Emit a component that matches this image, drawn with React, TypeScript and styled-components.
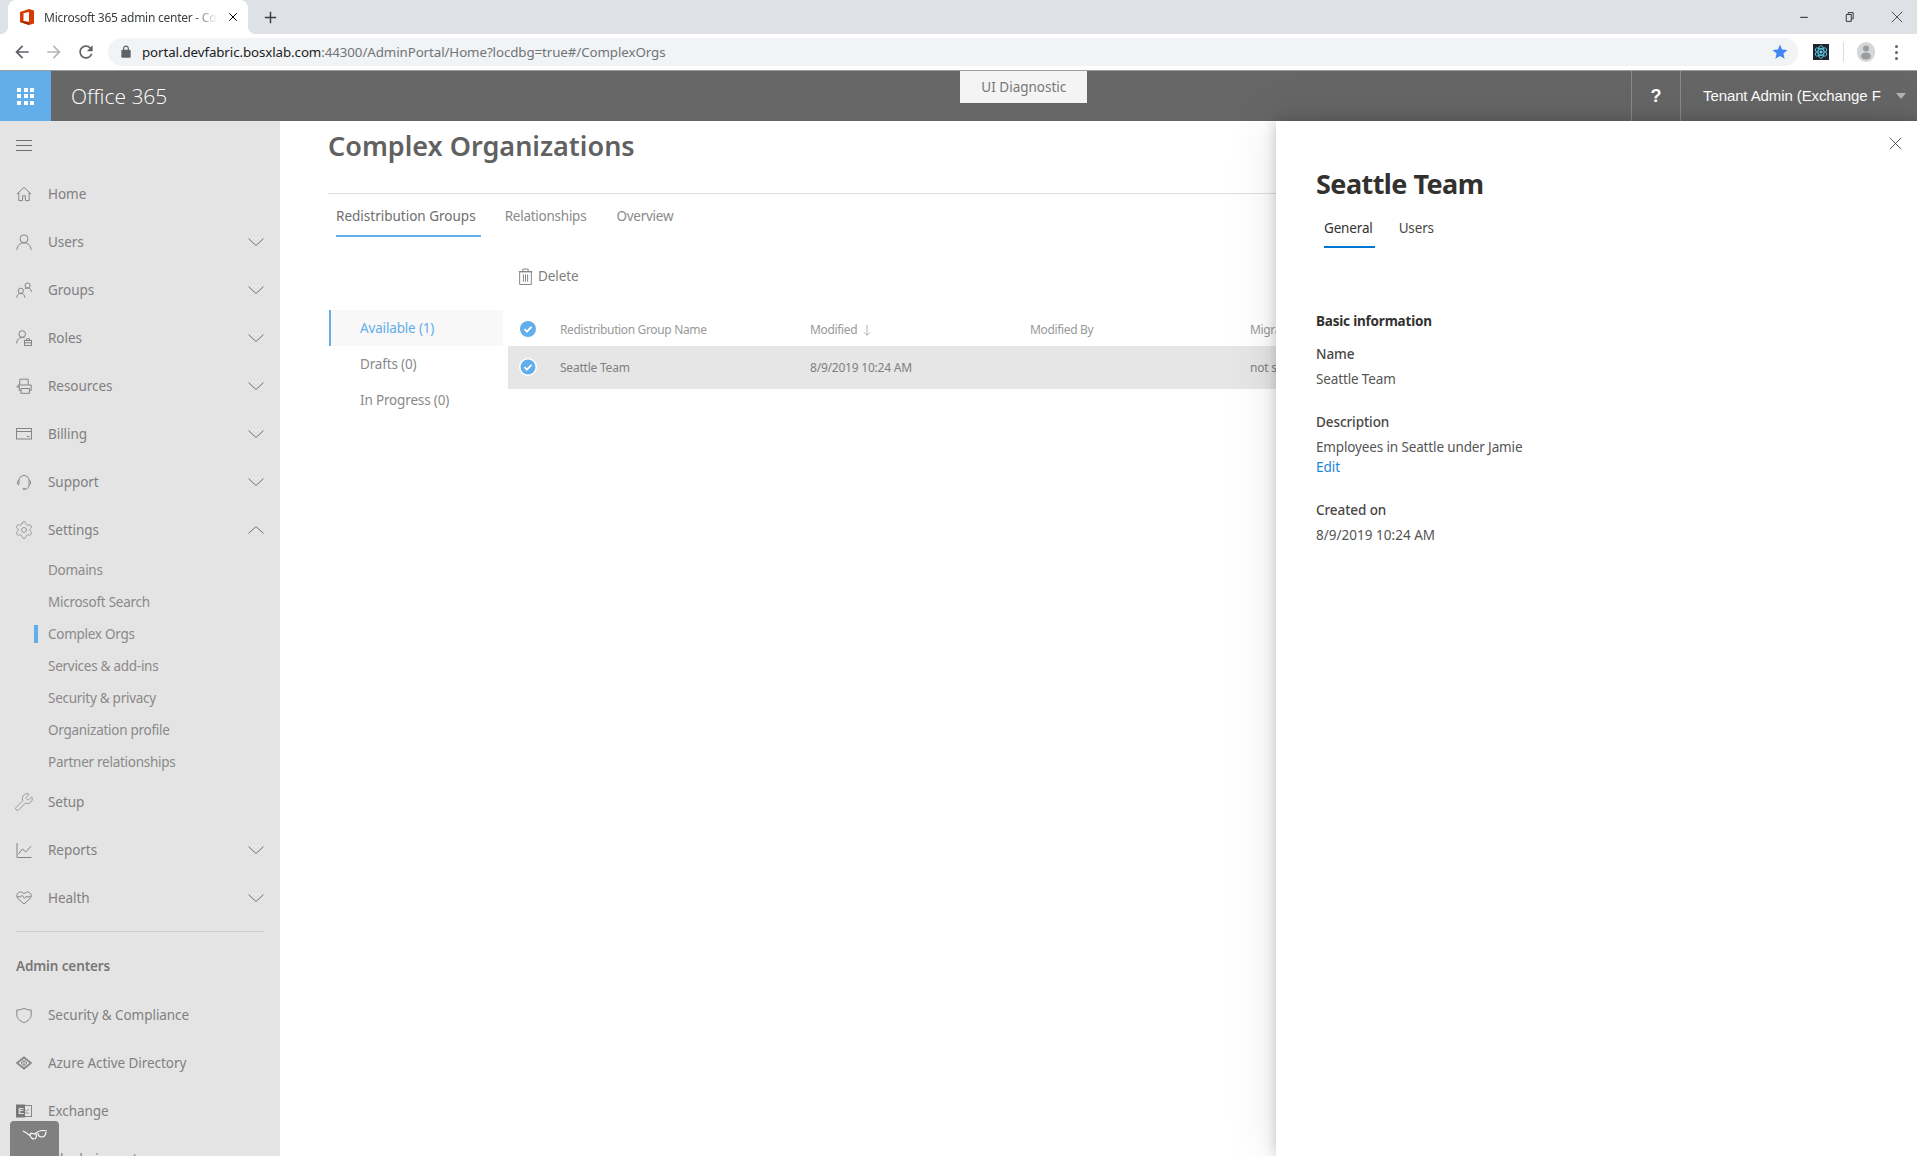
import React from 'react';
import styled, { createGlobalStyle } from 'styled-components';
import { Settings, Wrench } from 'lucide-react';

const FONT = '"Noto Sans", "Open Sans", sans-serif';

const GlobalStyle = createGlobalStyle`
  html, body {
    margin: 0;
    padding: 0;
    height: 100%;
    background: #fff;
    overflow: hidden;
  }
  * { box-sizing: border-box; }
  body { font-family: ${FONT}; }
`;

const Page = styled.div`
  width: 1917px;
  height: 1156px;
  display: flex;
  flex-direction: column;
  overflow: hidden;
`;

/* browser chrome */
const TabStrip = styled.div`
  height: 34px;
  background: #dee1e6;
  display: flex;
  align-items: flex-end;
  padding-left: 8px;
  flex: none;
`;

const Tab = styled.div`
  position: relative;
  width: 240px;
  height: 34px;
  background: #fff;
  border-radius: 8px 8px 0 0;
  display: flex;
  align-items: center;
  padding: 0 10px 0 12px;
  gap: 10px;

  &::before, &::after {
    content: '';
    position: absolute;
    bottom: 0;
    width: 8px;
    height: 8px;
  }
  &::before {
    left: -8px;
    background: radial-gradient(circle at 0 0, #dee1e6 8px, #fff 8.5px);
  }
  &::after {
    right: -8px;
    background: radial-gradient(circle at 100% 0, #dee1e6 8px, #fff 8.5px);
  }
`;

const TabTitle = styled.span`
  flex: 1;
  font-size: 12px;
  color: #3c4043;
  white-space: nowrap;
  overflow: hidden;
  letter-spacing: -0.25px;
  -webkit-mask-image: linear-gradient(90deg, #000 85%, transparent);
  mask-image: linear-gradient(90deg, #000 85%, transparent);
`;

const NewTab = styled.div`
  width: 16px;
  height: 34px;
  margin-left: 16px;
  display: flex;
  align-items: center;
  color: #3c4043;
`;

const WindowControls = styled.div`
  margin-left: auto;
  height: 34px;
  display: flex;
  align-items: center;
  padding-right: 14px;
  gap: 36px;
  color: #222;
`;

const Toolbar = styled.div`
  height: 36px;
  background: #fff;
  display: flex;
  align-items: center;
  padding-left: 6px;
  flex: none;
`;

const ToolbarButton = styled.div<{ $muted?: boolean }>`
  width: 32px;
  height: 32px;
  display: flex;
  align-items: center;
  justify-content: center;
  color: ${p => (p.$muted ? '#b4b6b8' : '#5f6368')};
`;

const AddressBar = styled.div`
  margin-left: 6px;
  width: 1690px;
  height: 28px;
  border-radius: 14px;
  background: #f1f3f4;
  display: flex;
  align-items: center;
  padding: 0 9px 0 11px;
`;

const AddressText = styled.span`
  margin-left: 9px;
  font-size: 13.33px;
  letter-spacing: -0.09px;
  color: #202124;
  white-space: nowrap;
`;

const AddressRest = styled.span`
  color: #70757a;
`;

const StarSlot = styled.div`
  margin-left: auto;
  display: flex;
  align-items: center;
`;

const ToolbarEnd = styled.div`
  flex: 1;
  display: flex;
  align-items: center;
  padding-left: 15px;
`;

const ExtBadge = styled.div`
  width: 16px;
  height: 16px;
  background: #20232a;
  display: flex;
  align-items: center;
  justify-content: center;
`;

const ToolbarSep = styled.div`
  width: 1px;
  height: 20px;
  background: #dadce0;
  margin: 0 13px 0 14px;
`;

const Avatar = styled.div`
  width: 18px;
  height: 20px;
  border-radius: 9px;
  background: #d4d6d8;
  display: flex;
  align-items: center;
  justify-content: center;
  color: #9a9c9e;
`;

const Dots = styled.div`
  margin-left: 20px;
  display: flex;
  flex-direction: column;
  gap: 3px;
  i {
    display: block;
    width: 3px;
    height: 3px;
    border-radius: 50%;
    background: #5f6368;
  }
`;

/* office header */
const Header = styled.header`
  height: 51px;
  background: #666;
  border-top: 1px solid #9d9d9d;
  display: flex;
  flex: none;
  color: #fff;
`;

const Waffle = styled.div`
  width: 51px;
  background: #62aeea;
  display: flex;
  align-items: center;
  justify-content: center;
`;

const WaffleGrid = styled.div`
  display: grid;
  grid-template-columns: repeat(3, 4px);
  grid-auto-rows: 4px;
  gap: 2.5px;
  i { background: #fff; display: block; }
`;

const Brand = styled.div`
  margin-left: 20px;
  font-family: "Open Sans", sans-serif;
  font-weight: 300;
  font-size: 21px;
  line-height: 50px;
`;

const HeaderCenter = styled.div`
  flex: 1;
  padding-left: 793px;
`;

const DiagnosticTab = styled.div`
  width: 127px;
  height: 32px;
  background: #f4f4f4;
  color: #777;
  font-size: 13.5px;
  line-height: 32px;
  text-align: center;
`;

const HelpCell = styled.div`
  width: 50px;
  border-left: 1px solid #8a8a8a;
  border-right: 1px solid #8a8a8a;
  font: bold 18px "Liberation Sans", sans-serif;
  line-height: 50px;
  text-align: center;
`;

const TenantCell = styled.div`
  width: 236px;
  display: flex;
  align-items: center;
  padding-left: 22px;
  padding-bottom: 2px;
  font: 15px "Liberation Sans", sans-serif;
  white-space: nowrap;
  letter-spacing: -0.1px;
`;

const Caret = styled.div`
  margin-left: 15px;
  margin-top: 2px;
  width: 0;
  height: 0;
  border-left: 5px solid transparent;
  border-right: 5px solid transparent;
  border-top: 6px solid #b5b5b5;
`;

/* body */
const Body = styled.div`
  flex: 1;
  display: flex;
  min-height: 0;
`;

const Sidebar = styled.nav`
  position: relative;
  width: 280px;
  flex: none;
  background: #e4e4e4;
  overflow: hidden;
  color: #808080;
  font-size: 13.5px;
  letter-spacing: -0.05px;
`;

const Hamburger = styled.div`
  height: 49px;
  display: flex;
  align-items: center;
  padding-left: 16px;
  color: #707070;
`;

const NavRow = styled.div`
  height: 48px;
  display: flex;
  align-items: center;
  padding: 0 16px;
`;

const NavIconSlot = styled.div`
  width: 16px;
  height: 18px;
  margin-right: 16px;
  display: flex;
  align-items: center;
  justify-content: center;
  color: #858585;
  svg { flex: none; }
`;

const NavChevron = styled.div`
  margin-left: auto;
  display: flex;
  color: #707070;
`;

const SubRow = styled.div<{ $active?: boolean }>`
  position: relative;
  height: 32px;
  line-height: 32px;
  padding-left: 48px;
  color: #8a8a8a;
  letter-spacing: -0.27px;

  ${p => p.$active && `
    &::before {
      content: '';
      position: absolute;
      left: 34px;
      top: 7px;
      width: 4px;
      height: 18px;
      background: #62aeea;
    }
  `}
`;

const NavDivider = styled.div`
  height: 1px;
  background: #cfcfcf;
  margin: 9px 16px 0;
`;

const NavHeading = styled.div`
  height: 59px;
  line-height: 69px;
  padding-left: 16px;
  font-weight: 600;
  color: #777;
  letter-spacing: -0.12px;
`;

const GlassesTab = styled.div`
  position: absolute;
  left: 10px;
  bottom: 0;
  width: 49px;
  height: 35px;
  background: #808080;
  border-radius: 4px 4px 0 0;
  display: flex;
  justify-content: center;
  padding-top: 8px;
  color: #fff;
`;

const Main = styled.main`
  flex: 1;
  min-width: 0;
  overflow: hidden;
  padding-left: 48px;
`;

const PageTitle = styled.h1`
  margin: 0;
  height: 72px;
  padding-top: 5px;
  font-size: 27px;
  line-height: 40px;
  font-weight: 600;
  color: #616161;
`;

const PageTabs = styled.div`
  border-top: 1px solid #dedede;
  height: 75px;
  display: flex;
  padding-left: 8px;
  gap: 30px;
`;

const PageTab = styled.div<{ $active?: boolean }>`
  height: 43px;
  padding-right: ${p => (p.$active ? '5px' : '0')};
  margin-right: ${p => (p.$active ? '-6px' : '0')};
  line-height: 44px;
  font-size: 13.5px;
  letter-spacing: ${p => (p.$active ? '0' : '-0.25px')};
  color: ${p => (p.$active ? '#6e6e6e' : '#8a8a8a')};
  border-bottom: 2px solid ${p => (p.$active ? '#62aeea' : 'transparent')};
`;

const Workspace = styled.div`
  display: flex;
  width: 1200px;
`;

const SideList = styled.div`
  width: 174px;
  margin-top: 42px;
  margin-left: 1px;
`;

const SideItem = styled.div<{ $active?: boolean }>`
  height: 36px;
  line-height: 36px;
  padding-left: ${p => (p.$active ? '29px' : '31px')};
  font-size: 13.5px;
  letter-spacing: -0.16px;
  color: ${p => (p.$active ? '#62aeea' : '#8a8a8a')};
  background: ${p => (p.$active ? '#f8f8f8' : 'transparent')};
  border-left: ${p => (p.$active ? '2px solid #62aeea' : 'none')};
`;

const TableArea = styled.div`
  margin-left: 5px;
  flex: 1;
`;

const CommandBar = styled.div`
  height: 44px;
  display: flex;
  align-items: center;
  gap: 4px;
  padding: 0 0 28px 9px;
  font-size: 13.5px;
  letter-spacing: -0.1px;
  color: #808080;
`;

const TableRow = styled.div<{ $selected?: boolean }>`
  display: grid;
  grid-template-columns: 52px 250px 220px 220px 1fr;
  align-items: center;
  height: ${p => (p.$selected ? '43px' : '34px')};
  padding-bottom: ${p => (p.$selected ? '1px' : '0')};
  background: ${p => (p.$selected ? '#e6e6e6' : 'transparent')};
  font-size: 12px;
  letter-spacing: ${p => (p.$selected ? '-0.22px' : '-0.35px')};
  color: ${p => (p.$selected ? '#808080' : '#999')};
`;

const CheckCell = styled.div`
  display: flex;
  justify-content: center;
  padding-right: 12px;
`;

const SortArrow = styled.span`
  display: inline-flex;
  margin-left: 4px;
  vertical-align: -2px;
  color: #999;
`;

const Panel = styled.aside`
  position: relative;
  width: 641px;
  flex: none;
  background: #fff;
  padding: 0 40px;
  box-shadow: 0 0 13px rgba(0, 0, 0, 0.2), 0 0 50px rgba(0, 0, 0, 0.1);
`;

const CloseButton = styled.div`
  position: absolute;
  top: 16px;
  right: 15px;
  display: flex;
  color: #333;
`;

const PanelTitle = styled.h2`
  margin: 0;
  padding-top: 43px;
  height: 88px;
  font-size: 27px;
  line-height: 40px;
  font-weight: 700;
  letter-spacing: -0.55px;
  color: #323130;
`;

const PanelTabs = styled.div`
  display: flex;
  padding-left: 8px;
  gap: 24px;
  height: 102px;
`;

const PanelTab = styled.div<{ $active?: boolean }>`
  height: 39px;
  line-height: 38px;
  padding-right: ${p => (p.$active ? '2px' : '0')};
  font-size: 13.5px;
  letter-spacing: -0.16px;
  color: ${p => (p.$active ? '#323130' : '#484644')};
  border-bottom: 2px solid ${p => (p.$active ? '#0078d4' : 'transparent')};
`;

const SectionHeading = styled.div`
  height: 20px;
  line-height: 20px;
  font-size: 13.5px;
  font-weight: 700;
  letter-spacing: -0.2px;
  color: #323130;
  margin-bottom: 13px;
`;

const Field = styled.div`
  margin-bottom: 23px;
`;

const FieldLabel = styled.div`
  height: 20px;
  line-height: 20px;
  font-size: 13.5px;
  font-weight: 500;
  letter-spacing: -0.08px;
  color: #484644;
  margin-bottom: 5px;
`;

const FieldValue = styled.div`
  height: 20px;
  line-height: 20px;
  font-size: 13.5px;
  letter-spacing: -0.14px;
  color: #555;
`;

const DateValue = styled(FieldValue)`
  letter-spacing: 0.02px;
`;

const EditLink = styled.a`
  display: block;
  height: 20px;
  line-height: 20px;
  font-size: 13.5px;
  color: #1a86d8;
`;

/* drawings */
const Glyph = ({ children, size = 16, box = 16, width = 1 }: { children: React.ReactNode; size?: number; box?: number; width?: number }) => (
  <svg width={size} height={size} viewBox={`0 0 ${box} ${box}`} fill="none" stroke="currentColor" strokeWidth={width}>
    {children}
  </svg>
);

const Solid = ({ d, size, color }: { d: string; size: number; color?: string }) => (
  <svg width={size} height={size} viewBox="0 0 24 24" fill={color || 'currentColor'}>
    <path d={d} />
  </svg>
);

const navIcons: Record<string, React.ReactNode> = {
  home: (
    <Glyph>
      <path d="M.8 8.2 8 1.4l7.2 6.8M2.8 6.6v8h3.8v-4.8h2.8v4.8h3.800v-8" />
    </Glyph>
  ),
  users: (
    <Glyph>
      <circle cx="8" cy="4.800" r="4" />
      <path d="M1 16c0-4.400 3-7.200 7-7.200s7 2.800 7 7.200" />
    </Glyph>
  ),
  groups: (
    <Glyph>
      <circle cx="4.800" cy="8.800" r="2.600" />
      <path d="M.8 15.600c0-2.600 1.700-4.200 4-4.200s4 1.600 4 4.200" />
      <circle cx="11.600" cy="3.600" r="2.600" />
      <path d="M8.800 6.800c.8-.6 1.800-.9 2.800-.9 2.200 0 3.800 1.600 3.800 4" />
    </Glyph>
  ),
  roles: (
    <Glyph>
      <circle cx="6.200" cy="4" r="3.300" />
      <path d="M.6 13.400C.8 9.800 3.200 7.400 6.200 7.400c.8 0 1.600.2 2.400.5" />
      <rect x="8.500" y="10.500" width="7" height="5" />
      <path d="M10.500 10.500V8.800h3v1.700M8.500 12.800h7" />
    </Glyph>
  ),
  resources: (
    <Glyph>
      <path d="M3.800 6V1.200h8.400v5.300M3.800 5.500.8 9h3" />
      <path d="M5 12.500H3.200V7h12v5.500h-1.800" />
      <rect x="5" y="10.500" width="8.400" height="4.800" />
    </Glyph>
  ),
  billing: (
    <Glyph>
      <rect x=".5" y="2.500" width="15" height="10.500" />
      <path d="M.5 5.500h15M11 10.500h2.500" />
    </Glyph>
  ),
  support: (
    <Glyph>
      <path d="M3 10.500V6.500a5 5 0 0 1 10 0v4" />
      <path d="M3 6.500h-.4a1.100 1.100 0 0 0-1.100 1.100v2a1.100 1.100 0 0 0 1.100 1.100H3M13 6.500h.4a1.100 1.100 0 0 1 1.100 1.100v2a1.100 1.100 0 0 1-1.100 1.100H13" />
      <path d="M13 10.700c0 2.800-1.600 4.500-4 4.500" />
      <circle cx="8" cy="15.200" r="1" />
    </Glyph>
  ),
  settings: <Settings size={20} strokeWidth={0.9} />,
  setup: <Wrench size={20} strokeWidth={0.9} />,
  reports: (
    <Glyph>
      <path d="M1 1v14.500h14.500M2.400 12l4-5 3.400 3 5.400-6" />
    </Glyph>
  ),
  health: (
    <Glyph>
      <path d="M8 14 1.800 8.400C-.4 5.800 1.400 2 4.400 2c1.500 0 2.600.7 3.600 1.800C9 2.700 10.100 2 11.600 2c3 0 4.800 3.800 2.600 6.400z" />
      <path d="M.8 6.800h4l1.200-1.600 2.400 3.200 1.400-1.600h5" />
    </Glyph>
  ),
  shield: (
    <Glyph>
      <path d="M8 1.200C5.800 2.600 3.400 3 .8 3v4.800c0 3.600 3.200 6.200 7.200 7.800 4-1.600 7.200-4.200 7.200-7.800V3c-2.600 0-5-.4-7.200-1.800z" />
    </Glyph>
  ),
  azure: (
    <Glyph>
      <path d="M8 2.500 15 8l-7 5.500L1 8z" strokeWidth="1.800" />
      <path d="M8 5.500 11 8l-3 2.500L5 8z" />
      <path d="M8 5.500v5" />
    </Glyph>
  ),
  exchange: (
    <svg width="16" height="16" viewBox="0 0 16 16">
      <rect x="5" y="2.500" width="10.500" height="11" fill="none" stroke="#888" />
      <path d="M8 6l2.500 2L13 6M8 10h5" fill="none" stroke="#999" />
      <rect x="0" y="1.500" width="9" height="13" fill="#777" />
      <text x="2.200" y="11" fontSize="8.500" fontWeight="700" fill="#e4e4e4" fontFamily="Liberation Sans">E</text>
    </svg>
  ),
};

const ChevronDown = () => (
  <Glyph><path d="M.5 4.500 8 11.500l7.500-7" /></Glyph>
);

const ChevronUp = () => (
  <Glyph><path d="M.5 11.500 8 4.500l7.500 7" /></Glyph>
);

const RowCheck = ({ ring }: { ring?: boolean }) => (
  <svg width="18" height="18" viewBox="0 0 18 18">
    {ring && <circle cx="9" cy="9" r="9" fill="#fff" />}
    <circle cx="9" cy="9" r={ring ? 7.500 : 8} fill="#62aeea" />
    <path d="M5.500 9.200l2.400 2.400 4.600-4.800" fill="none" stroke="#fff" strokeWidth="1.800" />
  </svg>
);

const OfficeLogo = () => (
  <svg width="14" height="16" viewBox="0 0 14 16">
    <path d="M0 3 9 0l5 1.500v13L9 16l-9-3z" fill="#d83b01" />
    <path d="M3.500 4.200 9 3v10l-5.500-.9z" fill="#fff" />
    <path d="M0 13l9 3V13.100L3.300 12.200z" fill="#a42b00" />
  </svg>
);

const expandable = true;
const topNav = [
  { icon: 'home', label: 'Home' },
  { icon: 'users', label: 'Users', expandable },
  { icon: 'groups', label: 'Groups', expandable },
  { icon: 'roles', label: 'Roles', expandable },
  { icon: 'resources', label: 'Resources', expandable },
  { icon: 'billing', label: 'Billing', expandable },
  { icon: 'support', label: 'Support', expandable },
];

const subNav = ['Domains', 'Microsoft Search', 'Complex Orgs', 'Services & add-ins', 'Security & privacy', 'Organization profile', 'Partner relationships'];

const lowerNav = [
  { icon: 'setup', label: 'Setup' },
  { icon: 'reports', label: 'Reports', expandable },
  { icon: 'health', label: 'Health', expandable },
];

const adminNav = [
  { icon: 'shield', label: 'Security & Compliance' },
  { icon: 'azure', label: 'Azure Active Directory' },
  { icon: 'exchange', label: 'Exchange' },
];

type NavEntry = { icon?: string; label: string; expandable?: boolean };

const NavLine = ({ item }: { item: NavEntry }) => (
  <NavRow>
    <NavIconSlot>{item.icon ? navIcons[item.icon] : null}</NavIconSlot>
    {item.label}
    {item.expandable && <NavChevron><ChevronDown /></NavChevron>}
  </NavRow>
);

export default function App() {
  return (
    <Page>
      <GlobalStyle />
      <TabStrip>
        <Tab>
          <OfficeLogo />
          <TabTitle>Microsoft 365 admin center - Complex Orgs</TabTitle>
          <Glyph size={10} width={1.6}><path d="M2 2l12 12M14 2 2 14" /></Glyph>
        </Tab>
        <NewTab>
          <Glyph size={13} width={1.8}><path d="M8 1v14M1 8h14" /></Glyph>
        </NewTab>
        <WindowControls>
          <Glyph size={10}><path d="M2 8.500h12" strokeWidth="1.600" /></Glyph>
          <Glyph size={10} width={1.400}><path d="M5 3V1h8v10h-2M2 4h8v11H2z" /></Glyph>
          <Glyph size={12}><path d="M1 1l14 14M15 1 1 15" /></Glyph>
        </WindowControls>
      </TabStrip>
      <Toolbar>
        <ToolbarButton><Solid size={20} d="M20 11H7.830l5.590-5.590L12 4l-8 8 8 8 1.410-1.410L7.830 13H20v-2z" /></ToolbarButton>
        <ToolbarButton $muted><Solid size={20} d="M12 4l-1.410 1.410L16.170 11H4v2h12.170l-5.580 5.590L12 20l8-8z" /></ToolbarButton>
        <ToolbarButton><Solid size={20} d="M17.650 6.350C16.200 4.900 14.210 4 12 4c-4.420 0-7.990 3.580-7.990 8s3.570 8 7.990 8c3.730 0 6.840-2.550 7.730-6h-2.080c-.82 2.330-3.040 4-5.650 4-3.310 0-6-2.690-6-6s2.690-6 6-6c1.660 0 3.140.69 4.220 1.780L13 11h7V4l-2.350 2.350z" /></ToolbarButton>
        <AddressBar>
          <Solid size={14} color="#5f6368" d="M18 8h-1V6c0-2.760-2.240-5-5-5S7 3.240 7 6v2H6c-1.100 0-2 .9-2 2v10c0 1.100.9 2 2 2h12c1.100 0 2-.9 2-2V10c0-1.100-.9-2-2-2zM9 6c0-1.660 1.340-3 3-3s3 1.340 3 3v2H9V6z" />
          <AddressText>portal.devfabric.bosxlab.com<AddressRest>:44300/AdminPortal/Home?locdbg=true#/ComplexOrgs</AddressRest></AddressText>
          <StarSlot><Solid size={18} color="#4285f4" d="M12 17.270L18.180 21l-1.640-7.030L22 9.240l-7.190-.61L12 2 9.190 8.630 2 9.240l5.460 4.730L5.820 21z" /></StarSlot>
        </AddressBar>
        <ToolbarEnd>
          <ExtBadge>
            <svg width="14" height="14" viewBox="0 0 24 24" fill="none" stroke="#61dafb" strokeWidth="1.400">
              <circle cx="12" cy="12" r="2" fill="#61dafb" />
              <ellipse cx="12" cy="12" rx="5" ry="11" />
              <ellipse cx="12" cy="12" rx="5" ry="11" transform="rotate(60 12 12)" />
              <ellipse cx="12" cy="12" rx="5" ry="11" transform="rotate(120 12 12)" />
            </svg>
          </ExtBadge>
          <ToolbarSep />
          <Avatar>
            <svg width="12" height="16" viewBox="0 0 12 16" fill="currentColor">
              <circle cx="6" cy="4.500" r="3" />
              <ellipse cx="6" cy="12" rx="5" ry="3.500" />
            </svg>
          </Avatar>
          <Dots><i /><i /><i /></Dots>
        </ToolbarEnd>
      </Toolbar>
      <Header>
        <Waffle>
          <WaffleGrid>
            {Array.from({ length: 9 }, (_, i) => <i key={i} />)}
          </WaffleGrid>
        </Waffle>
        <Brand>Office 365</Brand>
        <HeaderCenter>
          <DiagnosticTab>UI Diagnostic</DiagnosticTab>
        </HeaderCenter>
        <HelpCell>?</HelpCell>
        <TenantCell>Tenant Admin (Exchange F<Caret /></TenantCell>
      </Header>
      <Body>
        <Sidebar>
          <Hamburger>
            <Glyph><path d="M0 2.500h16M0 7.500h16M0 12.500h16" /></Glyph>
          </Hamburger>
          {topNav.map(item => <NavLine key={item.label} item={item} />)}
          <NavRow>
            <NavIconSlot>{navIcons.settings}</NavIconSlot>
            Settings
            <NavChevron><ChevronUp /></NavChevron>
          </NavRow>
          {subNav.map(label => (
            <SubRow key={label} $active={label === 'Complex Orgs'}>{label}</SubRow>
          ))}
          {lowerNav.map(item => <NavLine key={item.label} item={item} />)}
          <NavDivider />
          <NavHeading>Admin centers</NavHeading>
          {adminNav.map(item => <NavLine key={item.label} item={item} />)}
          <NavLine item={{ label: 'All admin centers' }} />
          <GlassesTab>
            <svg width="26" height="12" viewBox="0 0 26 12" fill="none" stroke="currentColor" strokeWidth="1.200">
              <path d="M1 2c3 1.500 5 3 7 4.500" />
              <path d="M8 4.500c2-.5 3.500 0 5 .5 2-2 5-3.500 8-3.500 2 0 4 .5 4 .5" />
              <path d="M8 5c0 3 2 5 4 5s3-2 2-5" />
              <path d="M16 4c0 3 2 4 4 4s4-2 4-5" />
            </svg>
          </GlassesTab>
        </Sidebar>
        <Main>
          <PageTitle>Complex Organizations</PageTitle>
          <PageTabs>
            <PageTab $active>Redistribution Groups</PageTab>
            <PageTab>Relationships</PageTab>
            <PageTab>Overview</PageTab>
          </PageTabs>
          <Workspace>
            <SideList>
              <SideItem $active>Available (1)</SideItem>
              <SideItem>Drafts (0)</SideItem>
              <SideItem>In Progress (0)</SideItem>
            </SideList>
            <TableArea>
              <CommandBar>
                <Glyph size={17} width={0.9}>
                  <path d="M2.500 3.500h11v12h-11zM1.500 3.500h13M5.500 3.500V1h5v2.500M6 6v7M8 6v7M10 6v7" />
                </Glyph>
                Delete
              </CommandBar>
              <TableRow>
                <CheckCell><RowCheck /></CheckCell>
                <span>Redistribution Group Name</span>
                <span>Modified<SortArrow><Glyph size={12}><path d="M8 1v14M4 11l4 4 4-4" /></Glyph></SortArrow></span>
                <span>Modified By</span>
                <span>Migration</span>
              </TableRow>
              <TableRow $selected>
                <CheckCell><RowCheck ring /></CheckCell>
                <span>Seattle Team</span>
                <span>8/9/2019 10:24 AM</span>
                <span />
                <span>not started</span>
              </TableRow>
            </TableArea>
          </Workspace>
        </Main>
        <Panel>
          <CloseButton><Glyph size={13}><path d="M1 1l14 14M15 1 1 15" /></Glyph></CloseButton>
          <PanelTitle>Seattle Team</PanelTitle>
          <PanelTabs>
            <PanelTab $active>General</PanelTab>
            <PanelTab>Users</PanelTab>
          </PanelTabs>
          <SectionHeading>Basic information</SectionHeading>
          <Field>
            <FieldLabel>Name</FieldLabel>
            <FieldValue>Seattle Team</FieldValue>
          </Field>
          <Field>
            <FieldLabel>Description</FieldLabel>
            <FieldValue>Employees in Seattle under Jamie</FieldValue>
            <EditLink>Edit</EditLink>
          </Field>
          <Field>
            <FieldLabel>Created on</FieldLabel>
            <DateValue>8/9/2019 10:24 AM</DateValue>
          </Field>
        </Panel>
      </Body>
    </Page>
  );
}
